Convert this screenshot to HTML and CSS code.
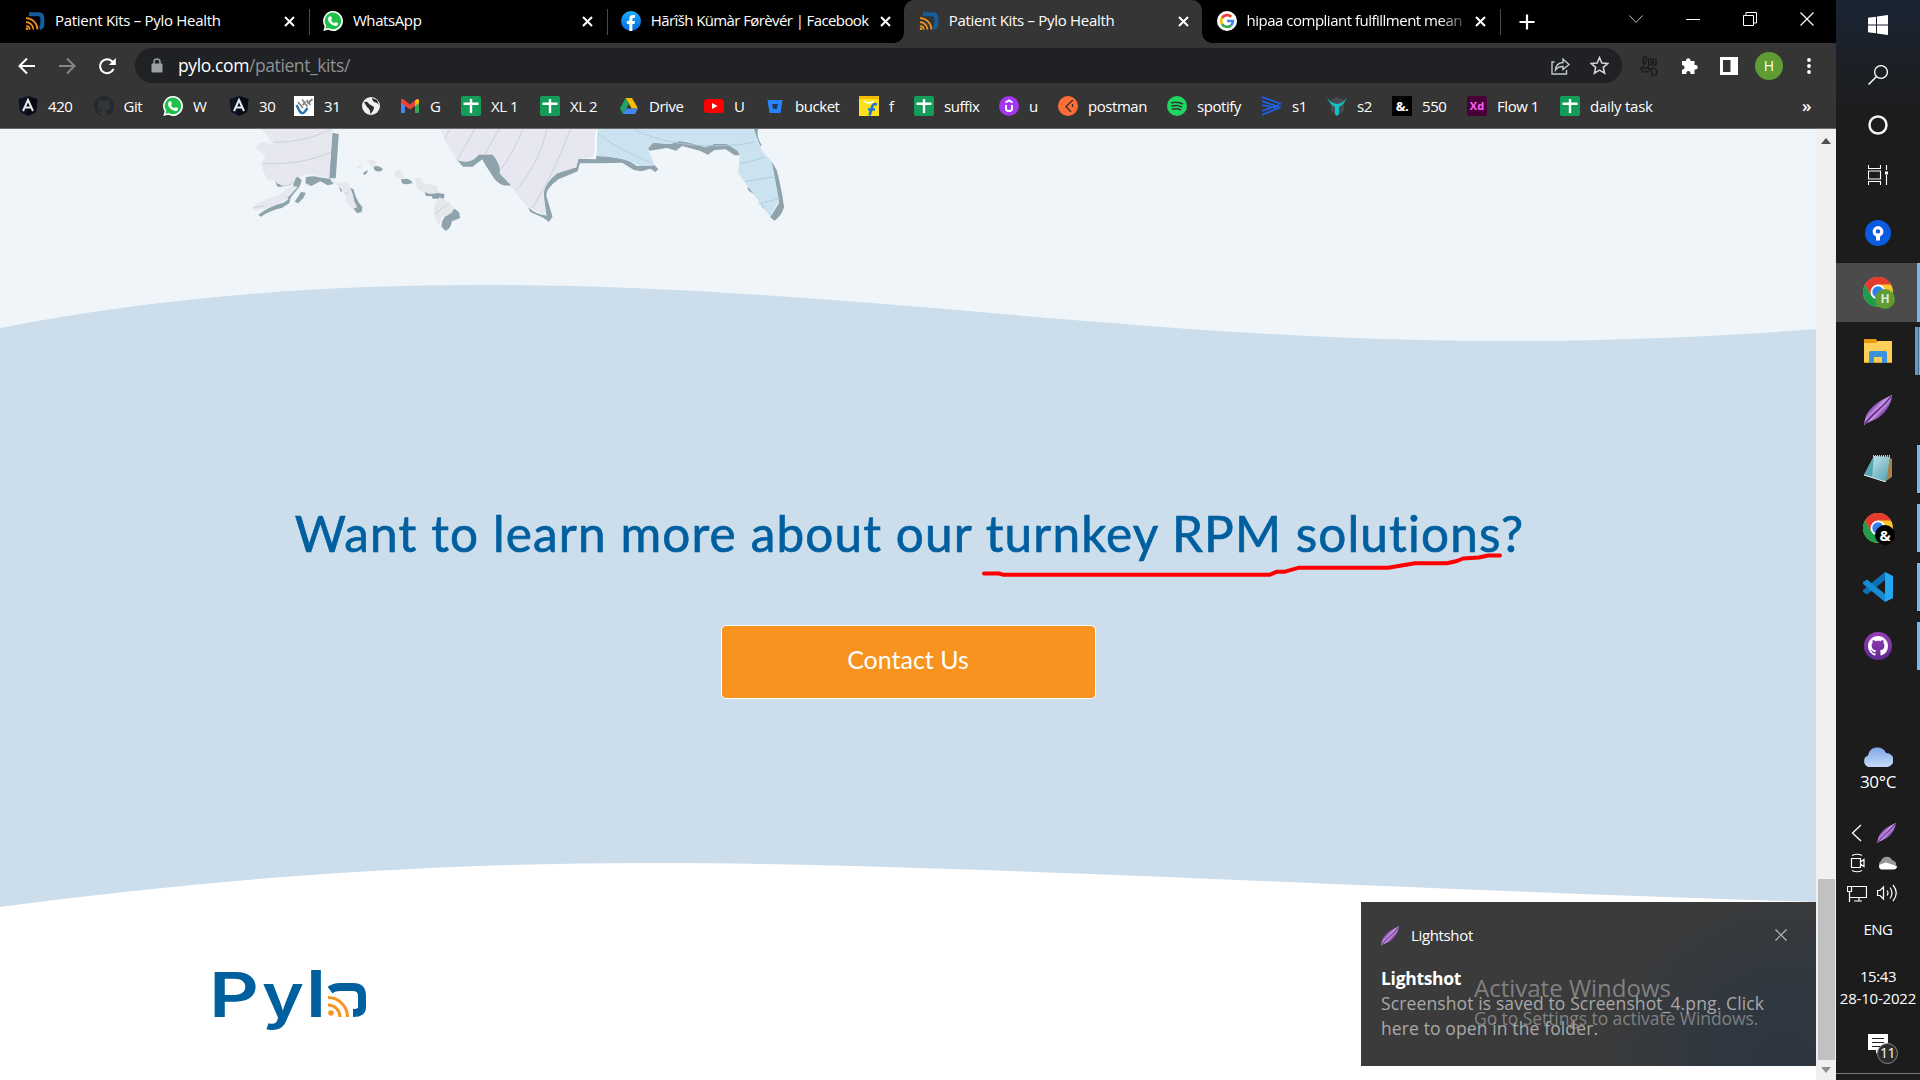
FILE: index.html
```html
<!DOCTYPE html>
<html lang="en">
<head>
<meta charset="utf-8">
<title>Patient Kits – Pylo Health</title>
<link rel="stylesheet" href="styles.css">
</head>
<body>
<svg class="defs" width="0" height="0">
  <defs>
    <linearGradient id="g-fb" x1="0" y1="0" x2="0" y2="1"><stop offset="0" stop-color="#1aafff"/><stop offset="1" stop-color="#0567e0"/></linearGradient>
    <linearGradient id="g-feather" x1="0.250" y1="0.250" x2="0.750" y2="0.750"><stop offset="0.2" stop-color="#8a45b8"/><stop offset="0.5" stop-color="#d5b4e8"/><stop offset="0.8" stop-color="#7a3ba8"/></linearGradient>
    <linearGradient id="g-cloud" x1="0" y1="0" x2="0" y2="1"><stop offset="0" stop-color="#7ea7e6"/><stop offset="1" stop-color="#c7dcfa"/></linearGradient>
    <linearGradient id="g-note" x1="0" y1="0" x2="1" y2="1"><stop offset="0" stop-color="#d9f0f4"/><stop offset="1" stop-color="#4a9eb0"/></linearGradient>
    <linearGradient id="g-git" x1="0" y1="0" x2="0" y2="1"><stop offset="0" stop-color="#9a3cb8"/><stop offset="1" stop-color="#5f2a91"/></linearGradient>
  </defs>
  <symbol id="pylo" viewBox="0 0 20 20">
    <path d="M4 3.2H13.5Q17.3 3.2 17.3 7V13.500Q17.300 16.300 14.500 17" fill="none" stroke="#155e9e" stroke-width="4"/>
    <path d="M1 7.200A11.500 11.500 0 0 1 12.500 18.500M1 11.200A7.500 7.500 0 0 1 8.500 18.500M1 15A3.800 3.800 0 0 1 4.800 18.600" fill="none" stroke="#f7931e" stroke-width="1.700"/>
    <circle cx="2" cy="17.700" r="1.300" fill="#f7931e"/>
  </symbol>
  <symbol id="whatsapp" viewBox="0 0 20 20">
    <path d="M10 0A10 10 0 1 1 5.200 18.800L.3 20 1.600 15.200A10 10 0 0 1 10 0Z" fill="#fff"/>
    <path d="M10 1.600A8.300 8.300 0 1 1 5.600 17L2.500 17.800 3.300 14.800A8.300 8.300 0 0 1 10 1.600Z" fill="#1fbf4a"/>
    <path d="M6.800 5.200 8 5.300 9 7.800 8 9.200Q9.300 11.500 11.400 12.200L12.600 11 15 12.200Q15 15 12.500 15 9.500 15 7 12.300 4.600 9.500 5 7.200 5.500 5.500 6.800 5.200Z" fill="#fff"/>
  </symbol>
  <symbol id="angular" viewBox="0 0 20 20">
    <path d="M10 0 19.500 3.200 18 16 10 20 2 16 .5 3.200Z" fill="#0c1422"/><path d="M10 0 19.500 3.200 18 16 10 20Z" fill="#050a14"/>
    <path d="M5 15 10 4 15 15M7 11.500H13" fill="none" stroke="#e8e8e8" stroke-width="2"/>
  </symbol>
  <symbol id="sheets" viewBox="0 0 20 20"><rect width="20" height="20" rx="2" fill="#149c59"/><path d="M10 3V17M2.500 7.800H17.500" stroke="#fff" stroke-width="2.400"/></symbol>
  <symbol id="octocat" viewBox="0 0 16 16"><path d="M8 0C3.580 0 0 3.580 0 8c0 3.540 2.290 6.530 5.470 7.590.4.070.55-.17.55-.38 0-.19-.01-.82-.01-1.490-2.010.37-2.530-.49-2.690-.94-.09-.23-.48-.94-.82-1.130-.28-.15-.68-.52-.01-.53.63-.01 1.080.58 1.230.82.72 1.210 1.870.87 2.330.66.070-.52.28-.87.51-1.070-1.780-.2-3.640-.89-3.640-3.950 0-.87.31-1.590.82-2.150-.08-.2-.36-1.020.080-2.120 0 0 .67-.21 2.200.82.64-.18 1.320-.27 2-.27s1.360.09 2 .27c1.530-1.040 2.200-.82 2.200-.82.44 1.100.16 1.920.080 2.120.51.56.82 1.270.82 2.150 0 3.070-1.870 3.750-3.650 3.950.29.25.54.73.54 1.480 0 1.070-.01 1.930-.01 2.200 0 .21.15.46.55.38A8.010 8.010 0 0 0 16 8c0-4.420-3.580-8-8-8z"/></symbol>
  <symbol id="feather" viewBox="0 0 28 30">
    <path d="M28 0C21 3 11 8 5.500 15 1 20.500 1 25 0 30 6 25.500 14 25 20 18 25 12.500 27.500 6 28 0Z" fill="url(#g-feather)"/>
    <path d="M1 29C6 21 18 13 27.500 1" stroke="#6b2a98" stroke-width="1.800" fill="none"/>
  </symbol>
  <symbol id="chrome" viewBox="0 0 30 30">
    <circle cx="15" cy="15" r="15" fill="#fdc62f"/>
    <path d="M2 7.500A15 15 0 0 0 15 30L21.500 18.700 8.500 18.700Z" fill="#1f9d4c"/>
    <path d="M2 7.500A15 15 0 0 1 28 7.500H15L8.500 18.700Z" fill="#e33b2e"/>
    <circle cx="15" cy="15" r="7.500" fill="#fff"/><circle cx="15" cy="15" r="5.700" fill="#2f7ff0"/>
  </symbol>
  <symbol id="close" viewBox="0 0 11 11"><path d="M1 1 10 10M10 1 1 10" stroke="#fff" stroke-width="2" fill="none"/></symbol>
</svg>

<div class="desktop">
  <main class="browser">
    <header class="tabs">
      <div class="tab"><svg class="fav"><use href="#pylo"/></svg><span class="tab-title">Patient Kits – Pylo Health</span><svg class="x"><use href="#close"/></svg></div>
      <div class="tab"><svg class="fav"><use href="#whatsapp"/></svg><span class="tab-title wa">WhatsApp</span><svg class="x"><use href="#close"/></svg></div>
      <div class="tab plain"><svg class="fav" viewBox="0 0 20 20"><circle cx="10" cy="10" r="10" fill="url(#g-fb)"/><path d="M8.300 20V13H5.800V10H8.300V8Q8.300 4 12 4H14V6.800H12.700Q11.400 6.800 11.400 8.200V10H14L13.500 13H11.400V20Z" fill="#fff"/></svg><span class="tab-title fb">Hãrîšh Kümàr Førèvér | Facebook</span><svg class="x"><use href="#close"/></svg></div>
      <div class="tab active"><svg class="fav"><use href="#pylo"/></svg><span class="tab-title">Patient Kits – Pylo Health</span><svg class="x"><use href="#close"/></svg></div>
      <div class="tab"><svg class="fav" viewBox="0 0 20 20"><circle cx="10" cy="10" r="10" fill="#fff"/><g fill="none" stroke-width="2.600"><path d="M5 7A6 6 0 0 1 14.300 5.800" stroke="#ea4335"/><path d="M5 13A6 6 0 0 1 5 7" stroke="#fbbc05"/><path d="M13.800 14.600A6 6 0 0 1 5 13" stroke="#34a853"/><path d="M10 10H16A6 6 0 0 1 13.800 14.600" stroke="#4285f4"/></g></svg><span class="tab-title fade">hipaa compliant fulfillment mean</span><svg class="x"><use href="#close"/></svg></div>
      <svg class="plus" viewBox="0 0 16 16"><path d="M8 .5V15.500M.5 8H15.500" stroke="#fff" stroke-width="2.200"/></svg>
      <div class="winctl">
        <svg width="14" height="14" viewBox="0 0 14 14"><path d="M.5 3.500 7 10.500 13.500 3.500" fill="none" stroke="#bbb"/></svg>
        <svg width="14" height="14" viewBox="0 0 14 14"><path d="M0 7.500H14" stroke="#fff"/></svg>
        <svg width="14" height="14" viewBox="0 0 14 14"><path d="M.5 3.500H10.500V13.500H.5ZM3 3V.5H13.500V11H11" fill="none" stroke="#fff"/></svg>
        <svg width="14" height="14" viewBox="0 0 14 14"><path d="M.5.5 13.500 13.500M13.500.5.5 13.500" stroke="#fff" stroke-width="1.200"/></svg>
      </div>
    </header>

    <nav class="toolbar">
      <svg class="nav" viewBox="0 0 18 18"><path d="M17 9H2M9 1.500 1.500 9 9 16.500" fill="none" stroke="#fff" stroke-width="2"/></svg>
      <svg class="nav" viewBox="0 0 18 18"><path d="M1 9H16M9 1.500 16.500 9 9 16.500" fill="none" stroke="#868686" stroke-width="2"/></svg>
      <svg class="nav" viewBox="0 0 18 18"><path d="M15.500 12A7 7 0 1 1 14 4.200L16 6.500" fill="none" stroke="#fff" stroke-width="2.100"/><path d="M17.800 1V8H10.800Z" fill="#fff"/></svg>
      <div class="omnibox">
        <svg class="lock" viewBox="0 0 12 14"><path d="M3 6V3.500A3 3 0 0 1 9 3.500V6" fill="none" stroke="#9aa0a6" stroke-width="1.500"/><rect x=".5" y="5" width="11" height="9" rx="1" fill="#9aa0a6"/></svg>
        <span class="url"><b>pylo.com</b>/patient_kits/</span>
        <svg class="share" viewBox="0 0 19 18"><path d="M3.500 5H1V17H15.500V13M4.500 13Q5 6 12 5.500V2L18 7.500 12 12.500V9.500Q7.500 9.200 4.500 13Z" fill="none" stroke="#c4c7c9" stroke-width="1.400"/></svg>
        <svg class="star" viewBox="0 0 18 18"><path d="M9 1.500 11.200 6.600 16.800 7.100 12.600 10.800 13.800 16.300 9 13.400 4.200 16.300 5.400 10.800 1.200 7.100 6.800 6.600Z" fill="none" stroke="#d2d4d6" stroke-width="1.500"/></svg>
      </div>
      <svg class="ext ghost" viewBox="0 0 18 20"><path d="M4 1Q7 0 6.500 3L4 8.500Q2 6 4 1ZM8.500 3H16V9H8.500ZM11 5H13.500V7H11ZM1 12Q4 10 5 13L8 11 10 13 7 16 3 16ZM11 13 14 12 17 15 16 19H12Z" fill="none" stroke="#161616" stroke-width="1.200"/></svg>
      <svg class="ext" viewBox="0 0 18 18"><path d="M2 4H6V3A2.300 2.300 0 0 1 10.500 3V4H14.500V8H15.500A2.300 2.300 0 0 1 15.500 12.600H14.500V17H10.500V16A2 2 0 0 0 6.300 16V17H2V12.600H2.800A2.200 2.200 0 0 0 2.800 8.300H2Z" fill="#fff"/></svg>
      <svg class="ext" viewBox="0 0 18 18"><path d="M0 0H18V18H0ZM3 3V15H10.500V3Z" fill="#fff" fill-rule="evenodd"/></svg>
      <span class="avatar">H</span>
      <svg class="dots" viewBox="0 0 4 16"><circle cx="2" cy="2" r="1.900" fill="#fff"/><circle cx="2" cy="8" r="1.900" fill="#fff"/><circle cx="2" cy="14" r="1.900" fill="#fff"/></svg>
    </nav>

    <nav class="bookmarks">
      <a><svg><use href="#angular"/></svg>420</a>
      <a><svg class="dim"><use href="#octocat"/></svg>Git</a>
      <a><svg><use href="#whatsapp"/></svg>W</a>
      <a><svg><use href="#angular"/></svg>30</a>
      <a><svg viewBox="0 0 20 20"><rect width="20" height="20" fill="#fff"/><path d="M2.500 9 5.500 15Q8 19 11 15.500L13.500 12" fill="none" stroke="#2774ae" stroke-width="2.500"/><path d="M4 6 9 12M8 3.500 13.500 10.500M8.500 9 12 6M12.500 4 16.500 9M13.500 7.500 18.500 3" fill="none" stroke="#7d858c" stroke-width="1.800"/></svg>31</a>
      <a><svg viewBox="0 0 20 20"><circle cx="10" cy="10" r="9" fill="#f1f1f1"/><path d="M3 6Q7 5 8 8L13 11Q13 15 9 18 10 14 6 11ZM11 2Q11 6 16 7L18 9 16 4Z" fill="#2d2d2d"/></svg></a>
      <a><svg viewBox="0 0 20 20"><path d="M1 17V5L5 8V17Z" fill="#4285f4"/><path d="M15 17V8L19 5V17Z" fill="#34a853"/><path d="M1 4Q2 2 4.500 4L10 8.500 15.500 4Q18 2 19 4V7L10 13.500 1 7Z" fill="#ea4335"/><path d="M15 5 17 3Q19 3 19 5V7L15 10Z" fill="#fbbc04"/></svg>G</a>
      <a><svg><use href="#sheets"/></svg>XL 1</a>
      <a><svg><use href="#sheets"/></svg>XL 2</a>
      <a><svg viewBox="0 0 20 20"><path d="M6.500 2H13L19 12.500H12.800Z" fill="#fbbc04"/><path d="M6.500 2 10 8 4 18 1 12.500Z" fill="#1fa463"/><path d="M7 12.500H19L16 18H4Z" fill="#4285f4"/></svg>Drive</a>
      <a><svg viewBox="0 0 20 20"><rect y="3" width="20" height="14" rx="3.500" fill="#f00"/><path d="M8 7 13.500 10 8 13Z" fill="#fff"/></svg>U</a>
      <a><svg viewBox="0 0 20 20"><path d="M2.500 4H17.500L15.500 17H4.500Z" fill="#2684ff"/><path d="M7 8H13L12 13H8Z" fill="#253858"/></svg>bucket</a>
      <a><svg viewBox="0 0 20 20"><path d="M0 0H20V20H0Z" fill="#ffe11b"/><path d="M0 0H20V3H0Z" fill="#f2bd00"/><path d="M5 5Q10 9 15 5" fill="none" stroke="#fff" stroke-width="1.500"/><path d="M18 8.500Q13.500 7 13 11.500L10.500 19.500M9 13.500H16" fill="none" stroke="#1b74d8" stroke-width="2.600"/></svg>f</a>
      <a><svg><use href="#sheets"/></svg>suffix</a>
      <a><svg viewBox="0 0 20 20"><circle cx="10" cy="10" r="10" fill="#a435f0"/><path d="M7 9V12.500Q7 15 10 15T13 12.500V9M6.500 6.500 10 4.500 13.500 6.500" fill="none" stroke="#fff" stroke-width="2"/></svg>u</a>
      <a><svg viewBox="0 0 20 20"><circle cx="10" cy="10" r="10" fill="#ff6c37"/><path d="M15 4 8 10.500 13 16M14.500 8V11" fill="none" stroke="#3c3430" stroke-width="1.500"/></svg>postman</a>
      <a><svg viewBox="0 0 20 20"><circle cx="10" cy="10" r="10" fill="#1ed760"/><path d="M4 7Q10 5 16 8M4.500 10.200Q10 8.500 15 11M5 13.300Q10 12 14 14" fill="none" stroke="#333" stroke-width="1.600"/></svg>spotify</a>
      <a><svg viewBox="0 0 20 20"><path d="M0 1 19 8M0 5 17 11M0 9 14 12M0 19 19 11M0 15 17 9" fill="none" stroke="#1f61e8" stroke-width="1.700"/></svg>s1</a>
      <a><svg viewBox="0 0 20 20"><path d="M4 4 10 1 17 4V15L10 20 4 15Z" fill="#454b4e"/><path d="M0 1Q2 8 8 11V18L10 20 12 18V11Q18 8 20 1 17 7 10 8 3 7 0 1Z" fill="#12c1c1"/></svg>s2</a>
      <a><span class="amp">&amp;.</span>550</a>
      <a><span class="xd">Xd</span>Flow 1</a>
      <a class="daily"><svg><use href="#sheets"/></svg>daily task</a>
      <span class="more">»</span>
    </nav>

    <div class="viewport">
      <div class="page">
        <section class="map">
          <svg class="usa" viewBox="0 27 1568 363" preserveAspectRatio="none">
            <g fill="#8fa3ad">
              <path d="M277 38 294 42 286 175 268 175Z"/>
              <path d="M88 98Q105 105 122 100L118 108Q104 112 95 106ZM122 184 130 192H142V200H128ZM178 166 194 180 188 200 160 238 150 232 170 200ZM205 172Q225 165 240 172L270 176 280 192 264 196 244 184 220 198 204 190ZM192 216 205 218 198 235 184 250 175 245ZM76 285Q110 255 145 248L165 232 160 250 140 264Q110 270 84 290ZM294 198 304 208 300 218ZM324 203 334 208Q340 240 358 262L356 276 344 280 334 266Q340 240 324 203Z"/>
              <path d="M388 140Q402 134 414 148 405 160 390 150ZM360 158 373 150 370 160 362 166ZM462 178Q485 172 494 188 478 196 465 190ZM526 216Q545 224 560 218L580 222 578 236H548L545 228 530 228ZM572 320Q570 290 608 266L620 278 622 294 600 304Q596 330 582 332Z"/>
              <path d="M614 120Q650 135 672 104H710Q735 140 728 160L760 196 740 196Q718 186 708 164 690 136 682 118L656 140 630 140ZM806 262Q830 286 855 286L848 222Q850 190 884 160L936 142 942 116 990 118 990 108Q1050 110 1080 124L1100 138 1148 136 1158 148 1150 156 1136 146 1112 154 1092 150 1060 128 1000 130 946 130 940 154 888 178Q850 210 856 230L872 290 862 306 848 294 812 276Z"/>
              <path d="M1128 80 1144 68 1190 72 1216 63Q1250 68 1285 82L1308 72H1344L1374 92 1378 106H1364L1340 88 1310 90 1292 104 1270 92 1222 78 1206 92 1182 84 1134 92ZM1416 27H1428Q1422 50 1438 76L1428 80ZM1464 124 1478 150Q1492 210 1498 262 1490 290 1472 302L1460 292 1484 250ZM1398 200 1418 214 1416 222 1402 212ZM1430 244 1448 258 1442 266Z"/>
            </g>
            <path fill="#e6e7ef" d="M85 27H277L268 174 210 162 180 172 165 198H140L126 186 100 176Q86 150 85 130L98 110 72 86Q72 66 92 66L118 78 102 48ZM60 262Q90 236 130 228L165 198 184 200 150 240 110 262 66 272ZM272 178 300 190 316 184Q334 220 334 240L344 262 332 266 316 250 310 220 296 202Z"/>
            <path fill="#e6e7ea" d="M340 142 354 132 356 142 346 148ZM370 122Q384 112 398 130L384 140ZM446 152 460 148 472 172 458 178 446 168ZM500 174 514 172 524 190 560 198 564 216 540 222 506 206ZM566 232Q590 240 604 262 606 284 572 292L566 316Q548 296 552 256Z"/>
            <path fill="#e6e7f0" d="M568 27H993L986 110 942 116 936 142 884 160Q850 190 846 222L856 288 806 262 728 160Q735 140 710 104H672Q655 130 614 120L590 80Z"/>
            <path fill="#8fa3ad" d="M672 104H710Q735 140 728 160L760 196H740Q718 186 708 164 692 136 680 110Z"/>
            <path fill="#cbe2f0" d="M993 27H1416L1440 96 1464 124Q1476 190 1484 240L1460 290 1430 244 1374 160 1378 106 1372 92 1344 72H1308L1285 82Q1250 66 1216 63L1190 72 1144 68 1130 86 1148 136 1110 138 1080 124Q1050 110 990 108Z"/>
            <path d="M992 30Q986 70 990 85L984 112" fill="none" stroke="#fff" stroke-width="4"/>
            <g fill="none" stroke="#c9ccd6" stroke-width="2.500">
              <path d="M118 67Q200 68 272 28M90 131Q190 136 272 98M138 197Q160 200 176 184M595 27 580 55M662 27 614 120M728 27 688 104M792 27Q770 90 734 146M857 27Q840 120 774 212M920 27Q880 150 818 264M555 280 594 248M62 264 90 258M308 222 322 216"/>
            </g>
            <g fill="none" stroke="#aecbdc" stroke-width="2.500"><path d="M993 40Q1060 95 1138 128M1090 27Q1200 90 1380 74L1418 66M1378 132 1446 112M1394 184 1474 170M1428 252 1486 236"/></g>
          </svg>
        </section>
        <svg class="wave top" viewBox="0 0 1816 58" preserveAspectRatio="none"><path d="M0 43C160 12 320 0 480 0 840 0 1140 56 1500 56 1610 56 1716 52 1816 44V58H0Z" fill="#ccddeb"/></svg>
        <section class="cta">
          <h1>Want to learn more about our turnkey RPM solutions?</h1>
          <button>Contact Us</button>
          <svg class="scribble" viewBox="980 550 524 30"><path d="M984 573.500H999L1003 574.700H1270L1277 571.700H1285L1299 567.700H1388L1415 563.300H1447L1457 561 1463 558.500 1479 557.500 1488 555.500H1500" fill="none" stroke="#f00" stroke-width="4" stroke-linecap="round" stroke-linejoin="round"/></svg>
        </section>
        <svg class="wave bottom" viewBox="0 0 1816 45" preserveAspectRatio="none"><path d="M0 44C220 14 440 0 650 0 950 0 1400 27 1816 39V45H0Z" fill="#fff"/></svg>
        <footer>
          <svg class="brand" viewBox="0 0 160 70">
            <g fill="#005f9f" font-family="Inter, sans-serif" font-weight="600">
              <text x="-4" y="50" font-size="62" textLength="50" lengthAdjust="spacingAndGlyphs">P</text>
              <text x="49" y="50" font-size="61" textLength="42" lengthAdjust="spacingAndGlyphs">y</text>
              <text x="93" y="50" font-size="64" textLength="20" lengthAdjust="spacingAndGlyphs">l</text>
            </g>
            <path d="M117 23Q121 20 127 20H140Q149 20 149 29V40Q149 46 140 46" fill="none" stroke="#005f9f" stroke-width="8"/>
            <path d="M115 30.500A19.500 19.500 0 0 1 134.500 50M115 38A12 12 0 0 1 127 50" fill="none" stroke="#f7931e" stroke-width="3"/>
            <circle cx="118" cy="46" r="2.800" fill="#f7931e"/>
          </svg>
        </footer>
      </div>
      <div class="scrollbar">
        <svg width="10" height="6" viewBox="0 0 10 6"><path d="M0 6 5 0 10 6Z" fill="#505050"/></svg>
        <i class="thumb"></i>
        <svg width="10" height="6" viewBox="0 0 10 6"><path d="M0 0H10L5 6Z" fill="#8f8f8f"/></svg>
      </div>
    </div>
  </main>

  <aside class="taskbar">
    <div class="sys"><svg width="20" height="20" viewBox="0 0 20 20"><path d="M0 2.800 8 1.700V9.500H0ZM9 1.500 20 0V9.500H9ZM0 10.500H8V18.300L0 17.200ZM9 10.500H20V20L9 18.500Z" fill="#fff"/></svg></div>
    <div class="sys"><svg width="20" height="20" viewBox="0 0 20 20"><circle cx="13" cy="7" r="6.400" fill="none" stroke="#fff" stroke-width="1.300"/><path d="M8.300 11.700.5 19.500" stroke="#fff" stroke-width="1.500"/></svg></div>
    <div class="sys"><svg width="20" height="20" viewBox="0 0 20 20"><circle cx="10" cy="10" r="8.500" fill="none" stroke="#f4f4f4" stroke-width="2.500"/></svg></div>
    <div class="sys"><svg width="20" height="20" viewBox="0 0 20 20"><path d="M.5 0V3.500H12.500V0M.5 20V16.500H12.500V20M.5 6H12.500V14H.5ZM18.500 0V5M18.500 10V20" fill="none" stroke="#fff" stroke-width="1.100"/><path d="M17 6.500H20V9.500H17Z" fill="#fff"/></svg></div>
    <div class="app first"><svg width="26" height="26" viewBox="0 0 26 26"><circle cx="13" cy="13" r="13" fill="#0a5be0"/><circle cx="13" cy="11.500" r="3.800" fill="none" stroke="#fff" stroke-width="3.200"/><path d="M11 13.500H15V20.500H11Z" fill="#fff"/></svg></div>
    <div class="app current"><svg width="30" height="30"><use href="#chrome"/></svg><span class="badge green">H</span></div>
    <div class="app open wide"><svg width="28" height="24" viewBox="0 0 28 24"><path d="M0 0H12L14 3H28V24H0Z" fill="#e39d0b"/><path d="M0 4H12L14 2H28V23H0Z" fill="#ffcf59"/><path d="M5 23V14Q5 12 7 12H21Q23 12 23 14V24H18V18H10V24H5Z" fill="#3a91dc"/></svg></div>
    <div class="app"><svg width="28" height="30"><use href="#feather"/></svg></div>
    <div class="app open"><svg width="28" height="27" viewBox="0 0 28 27"><path d="M24 2 28 4V22L22 26Z" fill="#a88048"/><path d="M10 1 26 2 22 27 0 20Z" fill="url(#g-note)"/><path d="M10 1 8 22 0 20Z" fill="#57a6b3"/><path d="M9 1H26" stroke="#ccc" stroke-width="2" stroke-dasharray="1 1"/><path d="M0 20 22 27" stroke="#e9eff0"/></svg></div>
    <div class="app open"><svg width="30" height="30"><use href="#chrome"/></svg><span class="badge black">&amp;</span></div>
    <div class="app open"><svg width="30" height="30" viewBox="0 0 30 30"><path d="M22 0 30 4V26L22 30Z" fill="#23a7f2"/><path d="M22 0V8L4 22.500 0 20V18Z" fill="#0b71b5"/><path d="M22 30V22L4 7.500 0 10V12Z" fill="#168bd2"/></svg></div>
    <div class="app open"><svg width="28" height="28" viewBox="0 0 28 28"><circle cx="14" cy="14" r="14" fill="url(#g-git)"/><svg x="4" y="4" width="20" height="20" fill="#fff"><use href="#octocat"/></svg></svg></div>

    <div class="weather"><svg width="30" height="20" viewBox="0 0 30 20"><path d="M6 20A6 6 0 0 1 5 8.500 9.500 9.500 0 0 1 23 6 7 7 0 0 1 24 20Z" fill="url(#g-cloud)"/></svg><span>30°C</span></div>
    <div class="tray">
      <svg width="20" height="20" viewBox="0 0 20 20"><path d="M14 2 5.500 10 14 18" fill="none" stroke="#fff" stroke-width="1.300"/></svg>
      <svg width="19" height="20"><use href="#feather"/></svg>
      <svg width="20" height="20" viewBox="0 0 20 20"><path d="M4.500 5.500H13.500V14.500H4.500ZM13.500 9 17 6.500V13.500L13.500 11M5 2.500Q10 0 15 2.500M5 17.500Q10 20 15 17.500" fill="none" stroke="#fff" stroke-width="1.200"/></svg>
      <svg width="20" height="20" viewBox="0 0 20 20"><path d="M4 15A4 4 0 0 1 4 8 6 6 0 0 1 15 7Q20 9 19 12L12 15Z" fill="#999"/><path d="M4 16.500A3 3 0 0 1 3 11.500L9 9.500 20 13Q20 16.500 16 16.500Z" fill="#fff"/></svg>
      <svg width="20" height="20" viewBox="0 0 20 20"><path d="M5 3.500H19.500V14.500H2.500V9M12 14.500V18M7 18H15M.5 3.500H4.500V8.500H.5ZM2.500 9V19" fill="none" stroke="#fff" stroke-width="1.200"/></svg>
      <svg width="20" height="20" viewBox="0 0 20 20"><path d="M.5 7.500H3L6.500 4V16L3 12.500H.5ZM10 7.500Q12 10 10 12.500M13 4.500Q17 10 13 15.500M16 2Q22.500 10 16 18" fill="none" stroke="#fff" stroke-width="1.200"/></svg>
    </div>
    <div class="lang">ENG</div>
    <div class="clock"><span>15:43</span><span class="date">28-10-2022</span></div>
    <div class="action"><svg width="20" height="22" viewBox="0 0 20 22"><path d="M0 0H20V16H11L8 20 8 16H0Z" fill="#fff"/><path d="M4 4.500H16M4 8.500H16M4 12.500H12" stroke="#222"/></svg><span class="count">11</span></div>
  </aside>

  <div class="toast">
    <div class="toast-head"><svg width="18" height="20"><use href="#feather"/></svg><span>Lightshot</span><svg class="dismiss" width="12" height="12" viewBox="0 0 12 12"><path d="M.5.5 11.500 11.500M11.500.5.5 11.500" stroke="#bbb" stroke-width="1.200"/></svg></div>
    <strong>Lightshot</strong>
    <p class="l1">Screenshot is saved to Screenshot_4.png. Click</p>
    <p class="l2">here to open in the folder.</p>
  </div>
  <div class="watermark"><div class="w1">Activate Windows</div><div class="w2">Go to Settings to activate Windows.</div></div>
</div>
</body>
</html>
```
FILE: styles.css
```css
* { box-sizing: border-box; }
body { margin: 0; background: #1c1c1c; font-family: "Open Sans", "Noto Sans", sans-serif; color: #fff; overflow: hidden; }
svg { display: block; flex: none; }
.defs { position: absolute; }
.desktop { position: relative; display: flex; width: 1920px; height: 1080px; overflow: hidden; }
.browser { width: 1836px; display: flex; flex-direction: column; background: #353535; }

/* tab strip */
.tabs { display: flex; height: 43px; background: #000; padding-left: 10px; align-items: stretch; flex: none; }
.tab { position: relative; width: 297.900px; display: flex; align-items: center; padding: 0 13px 1px 15px; gap: 10px; font-size: 15px; white-space: nowrap; border-radius: 10px 10px 0 0; }
.tab::after { content: ""; position: absolute; right: -2px; top: 9px; width: 1px; height: 26px; background: #4a4a4a; }
.tab.plain::after, .tab.active::after { display: none; }
.tab.active { background: #353535; }
.tab.active::before { content: ""; position: absolute; left: -10px; right: -10px; bottom: 0; height: 10px;
  background: radial-gradient(circle at 0 0, transparent 9.500px, #353535 10px) left / 10px 10px no-repeat, radial-gradient(circle at 100% 0, transparent 9.500px, #353535 10px) right / 10px 10px no-repeat; }
.fav { width: 20px; height: 20px; }
.x { width: 11px; height: 11px; }
.tab-title { flex: 1; overflow: hidden; letter-spacing: -0.3px; padding-bottom: 2px; }
.wa { letter-spacing: -0.4px; }
.fb { letter-spacing: -0.6px; }
.fade { letter-spacing: -0.5px; -webkit-mask: linear-gradient(90deg, #000 88%, rgba(0,0,0,.2)); mask: linear-gradient(90deg, #000 88%, rgba(0,0,0,.2)); }
.plus { width: 16px; height: 16px; align-self: center; margin-left: 20px; }
.winctl { margin-left: auto; display: flex; gap: 43px; padding: 12px 22px 0 0; }

/* toolbar */
.toolbar { display: flex; align-items: center; height: 45px; padding: 0 25px 0 18px; flex: none; }
.nav { width: 18px; height: 18px; margin-right: 22px; }
.nav:nth-child(3) { margin-right: 19px; }
.omnibox { width: 1487px; height: 35px; border-radius: 18px; background: #202124; display: flex; align-items: center; padding: 0 13px 0 16px; }
.lock { width: 12px; height: 15px; margin-right: 15px; }
.url { font-size: 17.500px; color: #8e9195; letter-spacing: -0.4px; margin-right: auto; line-height: 28px; padding-bottom: 2px; }
.url b { font-weight: 400; color: #fff; }
.share { width: 19px; height: 18px; margin-right: 20px; }
.star { width: 19px; height: 19px; }
.ext { width: 18px; height: 18px; margin-left: 22px; }
.ext.ghost { margin-left: 18px; height: 20px; }
.avatar { width: 28px; height: 28px; margin-left: 17px; border-radius: 50%; background: #5f9c34; font-size: 14px; text-align: center; line-height: 27px; }
.dots { width: 4px; height: 16px; margin-left: auto; }

/* bookmarks */
.bookmarks { display: grid; height: 41px; padding: 0 0 5px 18px; align-items: center; border-bottom: 1px solid #6b6b6b; flex: none;
  grid-template-columns: 75.500px 69.500px 66px 65px 67px 39px 61px 79px 79px 85px 61px 94px 55px 85px 59px 109px 95px 65px 65px 75px 93px 242px 20px; }
.bookmarks a { display: flex; align-items: center; gap: 10px; font-size: 15px; letter-spacing: -0.45px; line-height: 20px; white-space: nowrap; }
.bookmarks .daily { letter-spacing: -0.25px; }
.bookmarks svg, .amp, .xd { width: 20px; height: 20px; flex: none; }
.dim { fill: #24292e; }
.amp { background: #000; font-size: 13px; font-weight: 700; line-height: 20px; text-align: center; }
.xd { background: #470137; color: #ff61f6; font-size: 11px; font-weight: 700; line-height: 19px; text-align: center; border-radius: 3px; letter-spacing: 0; }
.more { font-size: 17px; font-weight: 600; line-height: 20px; }

/* page */
.viewport { display: flex; flex: 1; }
.page { width: 1816px; background: #fff; overflow: hidden; }
.map { height: 156px; background: #eff5f9; padding-left: 230px; }
.usa { width: 580px; height: 121px; }
.wave { width: 1816px; }
.wave.top { height: 58px; background: #eff5f9; }
.wave.bottom { height: 45px; background: #ccddeb; }
.cta { position: relative; height: 520px; background: #ccddeb; display: flex; flex-direction: column; align-items: center; padding-top: 155px; }
h1 { margin: 0 0 0 3px; font: 400 49.500px/70px Lato, sans-serif; color: #005f9f; letter-spacing: 1.130px; white-space: nowrap; -webkit-text-stroke: .7px #005f9f; stroke-linejoin: round; }
button { margin-top: 57px; width: 375px; height: 74px; background: #f7931e; border: 1px solid #fff; border-radius: 5px; color: #fff; font: 400 25px Lato, sans-serif; padding: 0 0 6px; }
.scribble { position: absolute; left: 980px; top: 207px; width: 524px; height: 30px; }
footer { padding: 59px 0 0 213px; }
.brand { width: 160px; height: 70px; overflow: visible; }
.scrollbar { width: 20px; background: #f0f0f0; display: flex; flex-direction: column; align-items: center; padding: 9px 0 7px; }
.thumb { width: 17px; height: 181px; margin: auto 0 7px; background: #c1c1c1; }

/* taskbar */
.taskbar { width: 84px; background: linear-gradient(#1a2434, #1c2026 60px, #1c1c1c 120px); display: flex; flex-direction: column; }
.sys { height: 50px; display: grid; place-items: center; flex: none; }
.app { position: relative; height: 59px; display: grid; place-items: center; padding-bottom: 2px; flex: none; }
.first { margin-top: 4px; }
.current { background: #4b4b4b; border-right: 3px solid #76b9ed; padding-left: 3px; }
.open::after { content: ""; position: absolute; right: 0; top: 5px; width: 3px; height: 48px; background: #76b9ed; }
.wide::after { width: 5px; background: linear-gradient(90deg, #659ac4 3px, #43688a 3px 4px, #76b9ed 4px); }
.badge { position: absolute; left: 39px; top: 26px; width: 20px; height: 20px; border-radius: 50%; font-size: 12px; font-weight: 700; line-height: 20px; text-align: center; }
.green { background: #5f9c34; color: #dceacf; }
.black { background: #000; font-size: 15px; }
.weather { margin-top: 71px; display: flex; flex-direction: column; align-items: center; font-size: 17px; letter-spacing: -0.3px; line-height: 28px; }
.weather span { margin-top: 1px; }
.tray { margin: 27px 0 0 11px; display: grid; grid-template-columns: 20px 20px; column-gap: 10px; row-gap: 10px; }
.lang { margin-top: 15px; text-align: center; font-size: 15px; line-height: 22px; letter-spacing: -0.5px; }
.clock { margin-top: 25px; text-align: center; font-size: 15px; line-height: 22px; letter-spacing: -0.4px; display: flex; flex-direction: column; }
.date { letter-spacing: -0.2px; }
.action { position: relative; margin-top: 25px; height: 40px; padding-left: 32px; border-bottom: 1px solid #777; }
.count { position: absolute; left: 41px; top: 9px; width: 21px; height: 21px; border-radius: 50%; border: 1px solid #888; background: #2c2c2c; font-size: 14px; line-height: 18px; text-align: center; letter-spacing: -.5px; }

/* notification */
.toast { position: absolute; left: 1361px; top: 902px; width: 455px; height: 164px; padding: 23px 29px 0 20px; background: radial-gradient(circle at 93% 100%, #2d3641 0, #2f3740 70px, #3b3b3b 190px); }
.toast-head { display: flex; align-items: center; gap: 12px; font-size: 15px; letter-spacing: -0.35px; height: 22px; }
.toast-head span { padding-bottom: 2px; }
.dismiss { margin-left: auto; margin-bottom: 2px; }
.toast strong { display: block; margin-top: 19px; font-size: 17.500px; font-weight: 700; line-height: 25px; letter-spacing: -0.3px; }
.toast p { margin: 0; font-size: 17.500px; line-height: 25px; color: #a9a9a9; white-space: nowrap; letter-spacing: 0.120px; }
.watermark { position: absolute; left: 1474px; top: 970px; color: rgba(170,170,170,.65); white-space: nowrap; }
.w1 { font-size: 24px; line-height: 36px; }
.w2 { font-size: 17.500px; line-height: 24px; letter-spacing: -0.070px; }
```
